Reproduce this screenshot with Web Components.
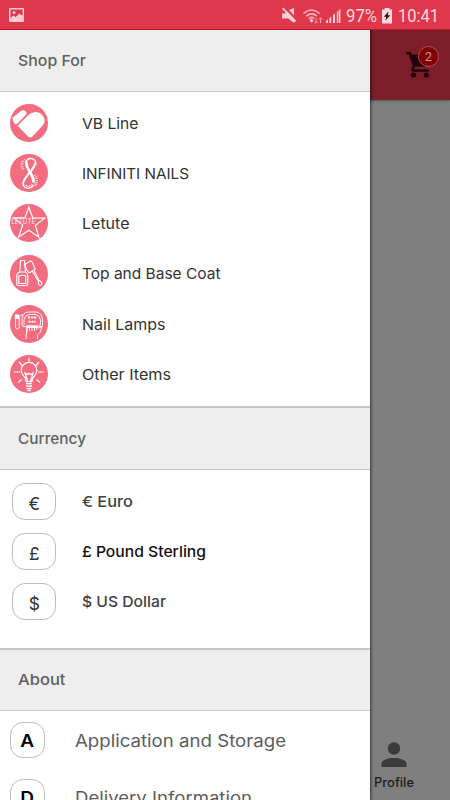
<!DOCTYPE html>
<html lang="en"><head><meta charset="utf-8"><title>Shop menu</title>
<style>
html,body{margin:0;width:450px;height:800px;overflow:hidden;background:#7f7f7f;font-family:Inter,"Open Sans",sans-serif}
</style></head><body>
<shop-app></shop-app>
<script>
class FitText extends HTMLElement{
  connectedCallback(){
    const w=+this.getAttribute('w');
    const r=this.attachShadow({mode:'open'});
    r.innerHTML=`<style>:host{display:block;flex:none;width:${w}px;white-space:nowrap;line-height:20px}span{display:inline-block;transform-origin:0 50%}</style><span></span>`;
    const s=r.querySelector('span');
    s.textContent=this.getAttribute('text');
    s.style.transform=`scaleX(${w/s.getBoundingClientRect().width})`;
  }
}
customElements.define('fit-text',FitText);

class StatusBar extends HTMLElement{
  constructor(){super();this.attachShadow({mode:'open'}).innerHTML=`
<style>:host{display:flex;align-items:center;box-sizing:border-box;height:30px;background:#df374b;border-bottom:1px solid #b9182c;color:#ffd9de;font:19px Roboto,sans-serif;padding:2px 11.500px 0 9px}
svg{display:block;flex:none}.s{flex:1}</style>
<svg width="15" height="15" viewBox="0 0 15 15"><path fill="#ffcbd2" fill-rule="evenodd" d="M1 0h13a1 1 0 0 1 1 1v12a1 1 0 0 1-1 1H1a1 1 0 0 1-1-1V1a1 1 0 0 1 1-1zM1.500 1.500v8.500l3-2.500 2 1.500 4-3.500 3 2.500v-6.500zM5 3a1.500 1.500 0 1 1 0 3 1.500 1.500 0 0 1 0-3z"/></svg>
<div class="s"></div>
<svg width="63" height="20" viewBox="281 5 63 20"><g fill="#ffd0d6"><path d="M283 12.500h3l2.100-2 6.900 7V22l-5.700-4.500H283zM290 9l5-2v7.200z"/><path d="M283 7.800l1.200-1.200 13 13.200-1.300 1.400z"/><path d="M327 22v-2l2-1.500V22zM330.400 22v-5l1.800-1.500V22zM334 22v-8l2-1.500V22zM337.800 22V11l1.100-1V22zM339.600 22V9.500l1.800-1.500v14z"/><circle cx="312.500" cy="19.600" r="1.600"/></g><g fill="none" stroke="#ffb5bf" stroke-width="1.600"><path d="M304.500 12.500q8-7 16 0M307.300 15.100q5.200-4.400 10.400 0M309.700 17.500q2.800-2.300 5.600 0"/></g><path fill="none" stroke="#f9a0ac" d="M317 17v5m-1.700-1.500l1.700 1.700 1.700-1.700M321.500 22v-5m-1.700 1.500l1.700-1.700 1.700 1.700"/></svg>
<fit-text style="margin-left:3.500px" w="31" text="97%"></fit-text>
<svg style="margin:0 4.500px 0 4px" width="12" height="16" viewBox="0 0 12 16"><path fill="#ffd9de" d="M3.500 0h5v1.500H11V15.500H1V1.500h2.500z"/><path fill="#251014" d="M7.500 3.500L2.800 8.800h2.400l-.8 3.800 4.900-5.400H6.800z"/></svg>
<fit-text w="41" text="10:41"></fit-text>`}
}
customElements.define('status-bar',StatusBar);

class SectionHead extends HTMLElement{
  connectedCallback(){this.attachShadow({mode:'open'}).innerHTML=`
<style>:host{display:flex;flex:none;align-items:center;box-sizing:border-box;height:61.500px;background:#eee;border-bottom:1.500px solid #c8c8c8;padding:1px 0 0 18.300px;color:#606060;font-size:15px;font-weight:500}
:host([ruled]){height:63.500px;border-top:2px solid #c5c5c5}</style><fit-text w="${this.getAttribute('w')}" text="${this.getAttribute('text')}"></fit-text>`}
}
customElements.define('section-head',SectionHead);

class MenuRow extends HTMLElement{
  connectedCallback(){this.attachShadow({mode:'open'}).innerHTML=`
<style>:host{display:flex;align-items:center;height:50.300px;padding-left:10px;font-size:14.800px;color:#333}
.i{width:72.300px;flex:none}fit-text{padding-top:1.500px}</style><div class="i"><slot></slot></div><fit-text w="${this.getAttribute('w')}" text="${this.getAttribute('text')}"></fit-text>`}
}
customElements.define('menu-row',MenuRow);

class AboutRow extends HTMLElement{
  connectedCallback(){this.attachShadow({mode:'open'}).innerHTML=`
<style>:host{display:flex;align-items:center;height:57px;padding-left:10px;font-size:17px;color:#5c5c5c}.i{width:65px;flex:none}fit-text{padding-top:1px}</style><div class="i"><slot></slot></div><fit-text w="${this.getAttribute('w')}" text="${this.getAttribute('text')}"></fit-text>`}
}
customElements.define('about-row',AboutRow);

class RoundIcon extends HTMLElement{
  connectedCallback(){
    const art={
heart:`<path fill="#fff" d="M2.600 15Q2.200 13.800 4 12.400L11 7Q13.500 5.500 15.800 7.500 17.300 9 16.200 10.500L7.500 19.500 5.500 20.500Q3 18 2.600 15zM7.600 21.800L18.500 11Q23 7 28.500 8.500 34 10.500 34.600 16.500 34.700 19 33 21L22.500 32.500Q20.500 34.500 18.300 32.800z"/>`,
infinity:`<g fill="none" stroke="#fff"><path stroke-width="1.500" d="M25.500 11C27 3.500 18 2.500 16 8M13.500 27C11.500 35 20.500 36 23.300 31"/><path stroke-width="2.800" d="M16.500 7.500c-2 7 8 13 7 21"/><path stroke-width="2" d="M25 9.500c-1 7-9.500 11-11.500 18.500"/><path stroke-width="2" stroke-dasharray=".6 1.300" d="M15 5.500Q10.500 9 14 16M24.500 21q4 5.500 0 11"/><path stroke-width="1.500" stroke-dasharray=".5 1.500" d="M12 7.500q-2 4 .5 8M26.500 22q2 6-2 10"/><path stroke-width="1.500" stroke-dasharray=".8 .8" d="M16 31q4 3 6-1"/></g>`,
star:`<path fill="none" stroke="#fff" stroke-width="1.200" d="M18.800 3l3.900 10.800 12 .3-9.400 7.400 3.700 11.800-10.200-7L8.500 33.300l4.200-12.200-9-7.300h11.300z"/><text x="1.200" y="20.300" fill="#ffe3e7" font-family="Lato,sans-serif" font-size="7" font-style="italic" textLength="24">LETUTE</text>`,
polish:`<g fill="none" stroke="#fff" stroke-width="1.100" stroke-linejoin="round"><path d="M9.800 17l.7-11.500h4L15.500 17M9.800 17q-3 1-3 3.500v8.500q0 1.500 1.500 1.500h8q1.500 0 1.500-1.500v-8q0-3-2.300-4zM8.800 28.500v-7.500q4-1.500 7 0v7.500z"/><path d="M14.500 9.500l5.500-3.200q1.300-.5 2 .8l3.200 7-5.700 3.700q-1.600-.3-2.500-2.300zM22.500 16.500l6 10q-.8 3 1.800 4 2.200-.5 1.200-3-1-2-2.300-1.500l-5-10.300"/></g>`,
lamp:`<g fill="none" stroke="#fff" stroke-width=".9"><path d="M5.600 14v9q1.800 2.300 3.600 0V12q.8-2 3.800-2.500M12 20v-6q1-6.500 6-7h8q5.500.5 6.500 7v7.500h-4M12 19.500l1 2h3M14 20v-5q.5-4.500 5-5.500h7q4 1 4.500 5.500v5h-2M17 23l-.8 7v4M28 23l3.500-1-1 5-3 3v4"/><path d="M17 20v8M19.500 20v6M22 20v6M24.500 20v6M27 21l-.5 4"/></g><g stroke="#fff" stroke-width="2" stroke-dasharray="2 .9"><path d="M18 12.500h9M18.500 16.800h7"/></g><g fill="#fff"><path d="M4.800 9.500h4.500v4.500H4.800zM16 20.500h12v2.500H16z"/></g>`,
bulb:`<g fill="none" stroke="#fff" stroke-width="1.200"><path d="M16 26.500q0-3.500-2.700-6a7.800 7.800 0 1 1 11.400 0Q22 23 22 26.500zM17.500 26l-2.500-8 2.300 1.500 1.700-1.300 1.700 1.300 2.300-1.500-2.500 8M19 2.500v5.500M9 7l3.500 4M29 7l-3.500 4M4 17h6M28 17h6M8 27.500l3.500-3M30 27.500l-3.500-3"/><path stroke-width="1.500" d="M16 28.500h6M16 31h6M16.500 33.500h5M17.500 35.500h3"/></g>`};
    this.attachShadow({mode:'open'}).innerHTML=`<style>:host{display:block}svg{display:block}</style><svg width="38" height="38" viewBox="0 0 38 38"><circle cx="19" cy="19" r="19" fill="#f36c7f"/>${art[this.getAttribute('name')]}</svg>`}
}
customElements.define('round-icon',RoundIcon);

class BoxIcon extends HTMLElement{
  constructor(){super();this.attachShadow({mode:'open'}).innerHTML=`
<style>:host{display:flex;align-items:center;justify-content:center;box-sizing:border-box;width:44px;height:37px;margin-left:2.400px;border:1px solid #bdbdbd;border-radius:13px;color:#333;font-size:17.500px;font-weight:400;line-height:20px;padding-top:5px}
:host([letter]){width:35px;height:36px;margin-left:0;color:#000;font-size:17px;font-weight:600;padding-top:2px}
span{display:block}:host([letter]) span{transform:scaleX(1.120)}</style><span><slot></slot></span>`}
}
customElements.define('box-icon',BoxIcon);

class AppBehind extends HTMLElement{
  constructor(){super();this.attachShadow({mode:'open'}).innerHTML=`
<style>:host{display:flex;flex-direction:column;width:80px;flex:none;background:#7f7f7f}
.top{height:70px;box-sizing:border-box;background:#7b1e2a;border-bottom:1px solid #6a2730;padding:22px 0 0 36px;box-shadow:0 1px 2px #555}
.cart{position:relative;width:34px}
.badge{position:absolute;left:12px;top:-6px;width:19px;height:19px;border:1px solid #b25555;border-radius:50%;background:#800000;color:#cf9292;font:13px/20px Roboto,sans-serif;text-align:center}
.mid{flex:1}.tab{height:60px;padding-left:4px;font-weight:500;font-size:12.500px;color:#1c1c1c}
svg{display:block}.tab svg{margin:2px 0 6px 7px}</style>
<div class="top"><div class="cart"><svg width="26" height="27" viewBox="0 0 26 27"><path fill="#210409" d="M0 0h4.700l1.300 2.500H25l-5 11.300q-.5 1-1.800 1H8.800l-1.200 2.400h15v2.500H6.800q-2.500-.4-1.500-2.700l1.600-3L2.600 2.500H0z"/><circle cx="7.500" cy="23" r="2.600" fill="#210409"/><circle cx="20.300" cy="23" r="2.600" fill="#210409"/></svg><span class="badge">2</span></div></div>
<div class="mid"></div>
<div class="tab"><svg width="26" height="25" viewBox="0 0 26 25"><circle cx="13" cy="6.500" r="6.200" fill="#3b3b3b"/><path fill="#3b3b3b" d="M.5 25v-3.500C.5 18 7.500 16 13 16s12.500 2 12.500 5.500V25z"/></svg><fit-text w="40" text="Profile"></fit-text></div>`}
}
customElements.define('app-behind',AppBehind);

class ShopApp extends HTMLElement{
  constructor(){super();this.attachShadow({mode:'open'}).innerHTML=`
<style>:host{display:block;width:450px;height:800px;overflow:hidden}
.main{display:flex;height:770px}
.drawer{width:370px;height:770px;overflow:hidden;flex:none;background:#fff;display:flex;flex-direction:column;z-index:1;box-shadow:0 0 3px 1px #0009}
status-bar{position:relative;z-index:2}
.a,.b,.c{flex:none;box-sizing:border-box}
.a{height:314.500px;padding-top:6.200px}.b{height:178px;padding-top:6.500px}.c{padding-top:.5px}
.b menu-row{font-weight:500;color:#424242}.b .on{color:#111}
</style>
<status-bar></status-bar>
<div class="main"><div class="drawer">
<section-head w="68" text="Shop For"></section-head>
<div class="a">
<menu-row w="56.500" text="VB Line"><round-icon name="heart"></round-icon></menu-row>
<menu-row w="107" text="INFINITI NAILS"><round-icon name="infinity"></round-icon></menu-row>
<menu-row w="47.500" text="Letute"><round-icon name="star"></round-icon></menu-row>
<menu-row w="138.500" text="Top and Base Coat"><round-icon name="polish"></round-icon></menu-row>
<menu-row w="83.500" text="Nail Lamps"><round-icon name="lamp"></round-icon></menu-row>
<menu-row w="89" text="Other Items"><round-icon name="bulb"></round-icon></menu-row>
</div>
<section-head ruled w="68" text="Currency"></section-head>
<div class="b">
<menu-row w="51" text="€ Euro"><box-icon>€</box-icon></menu-row>
<menu-row class="on" w="124" text="£ Pound Sterling"><box-icon>£</box-icon></menu-row>
<menu-row w="84" text="$ US Dollar"><box-icon>$</box-icon></menu-row>
</div>
<section-head ruled w="47.500" text="About"></section-head>
<div class="c">
<about-row w="211" text="Application and Storage"><box-icon letter>A</box-icon></about-row>
<about-row w="177" text="Delivery Information"><box-icon letter>D</box-icon></about-row>
</div></div><app-behind></app-behind></div>`}
}
customElements.define('shop-app',ShopApp);
</script></body></html>
